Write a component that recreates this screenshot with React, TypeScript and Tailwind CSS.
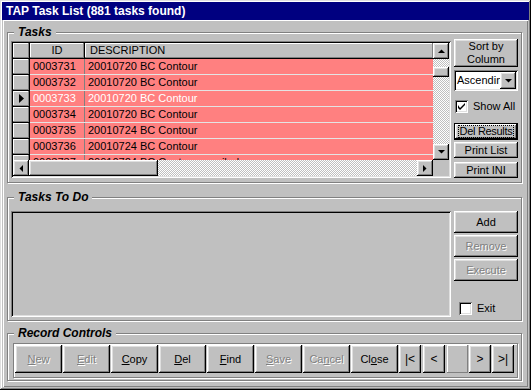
import React from 'react';

const raised =
  'shadow-[inset_-1px_-1px_0_#000,inset_1px_1px_0_#fff,inset_-2px_-2px_0_#808080,inset_2px_2px_0_#dfdfdf]';
const raisedThin = 'shadow-[inset_-1px_-1px_0_#808080,inset_1px_1px_0_#fff]';
const sunken =
  'shadow-[inset_1px_1px_0_#808080,inset_-1px_-1px_0_#fff,inset_2px_2px_0_#000,inset_-2px_-2px_0_#dfdfdf]';
const etched = 'border border-[#808080] shadow-[1px_1px_0_#fff,inset_1px_1px_0_#fff]';
const dither = 'bg-[repeating-conic-gradient(#fff_0_25%,#c0c0c0_0_50%)] bg-[length:2px_2px]';
const disabledText = 'text-[#808080] [text-shadow:1px_1px_0_#fff]';

type Dir = 'up' | 'down' | 'left' | 'right';

const Arrow = ({ dir }: { dir: Dir }) => {
  const pts: Record<Dir, string> = {
    up: '0,4 7,4 3.5,0.5',
    down: '0,0 7,0 3.5,3.5',
    left: '4,0 4,7 0.5,3.5',
    right: '0,0 0,7 3.5,3.5',
  };
  const vertical = dir === 'up' || dir === 'down';
  return (
    <svg width={vertical ? 7 : 4} height={vertical ? 4 : 7} viewBox={vertical ? '0 0 7 4' : '0 0 4 7'}>
      <polygon points={pts[dir]} fill="#000" />
    </svg>
  );
};

const ScrollBtn = ({ dir }: { dir: Dir }) => (
  <div className={`w-[16px] h-[16px] shrink-0 bg-[#c0c0c0] flex items-center justify-center ${raised}`}>
    <Arrow dir={dir} />
  </div>
);

const Btn = ({
  children,
  className = '',
  disabled = false,
}: {
  children: React.ReactNode;
  className?: string;
  disabled?: boolean;
}) => (
  <div
    className={`flex items-center justify-center text-center bg-[#c0c0c0] leading-[13px] ${raised} ${
      disabled ? disabledText : 'text-black'
    } ${className}`}
  >
    {children}
  </div>
);

const Check = ({ checked }: { checked: boolean }) => (
  <div className={`w-[13px] h-[13px] bg-white flex items-center justify-center ${sunken}`}>
    {checked && (
      <svg width="7" height="7" viewBox="0 0 7 7">
        <path d="M0 2v3l2 2l5-5v-2l-5 5z" fill="#000" />
      </svg>
    )}
  </div>
);

const Group = ({
  title,
  className = '',
  children,
}: {
  title: string;
  className?: string;
  children: React.ReactNode;
}) => (
  <div className={`relative w-[515px] ml-[4px] ${etched} ${className}`}>
    <div className="absolute top-[-8px] left-[6px] px-[4px] bg-[#c0c0c0] font-bold italic text-[12px] leading-[14px] text-black">
      {title}
    </div>
    {children}
  </div>
);

const rows = [
  ['0003731', '20010720 BC Contour'],
  ['0003732', '20010720 BC Contour'],
  ['0003733', '20010720 BC Contour'],
  ['0003734', '20010720 BC Contour'],
  ['0003735', '20010724 BC Contour'],
  ['0003736', '20010724 BC Contour'],
  ['0003737', '20010724 BC Contour emailed'],
];

const TaskGrid = () => (
  <div className={`w-[440px] h-[137px] p-[2px] flex flex-col bg-[#c0c0c0] ${sunken}`}>
    <div className="flex h-[117px]">
      <div className="w-[420px] flex flex-col overflow-hidden">
        {/* header */}
        <div className="flex h-[16px] shrink-0">
          <div className={`w-[17px] border-r border-b border-black ${raisedThin}`} />
          <div className={`w-[55px] border-r border-b border-black flex items-center justify-center ${raisedThin}`}>
            ID
          </div>
          <div className={`flex-1 border-b border-black flex items-center pl-[5px] ${raisedThin}`}>DESCRIPTION</div>
        </div>
        {rows.map(([id, desc], i) => {
          const selected = i === 2;
          return (
            <div key={id} className="flex h-[16px] shrink-0">
              <div
                className={`w-[17px] border-r border-b border-black bg-[#c0c0c0] flex items-center justify-center ${raisedThin}`}
              >
                {selected && (
                  <svg width="5" height="9" viewBox="0 0 5 9">
                    <polygon points="0,0 5,4.5 0,9" fill="#000" />
                  </svg>
                )}
              </div>
              <div
                className={`flex-1 flex bg-[#ff8080] border-b border-[#e4e4e4] ${
                  selected ? 'text-white' : 'text-black'
                }`}
              >
                <div className="w-[55px] border-r border-[#808080] pl-[3px] flex items-center">{id}</div>
                <div className="flex-1 pl-[3px] flex items-center whitespace-nowrap">{desc}</div>
              </div>
            </div>
          );
        })}
      </div>
      {/* vertical scrollbar */}
      <div className={`w-[16px] flex flex-col ${dither}`}>
        <ScrollBtn dir="up" />
        <div className="h-[8px]" />
        <div className={`h-[10px] bg-[#c0c0c0] ${raised}`} />
        <div className="flex-1" />
        <ScrollBtn dir="down" />
      </div>
    </div>
    {/* horizontal scrollbar */}
    <div className="flex h-[16px]">
      <div className={`w-[420px] flex ${dither}`}>
        <ScrollBtn dir="left" />
        <div className={`w-[129px] bg-[#c0c0c0] ${raised}`} />
        <div className="flex-1" />
        <ScrollBtn dir="right" />
      </div>
      <div className="w-[16px] bg-[#c0c0c0]" />
    </div>
  </div>
);

export default function App() {
  return (
    <div
      className={`w-[531px] h-[390px] bg-[#c0c0c0] p-[2px] flex flex-col text-[11px] text-black font-['Liberation_Sans',Arial,sans-serif] shadow-[inset_-1px_-1px_0_#000,inset_1px_1px_0_#dfdfdf,inset_-2px_-2px_0_#808080,inset_2px_2px_0_#fff]`}
    >
      <div className="h-[18px] shrink-0 bg-[#000080] text-white font-bold text-[12px] pl-[4px] flex items-center">
        TAP Task List (881 tasks found)
      </div>

      <div className="flex-1 mx-[1px] mb-[1px] flex flex-col shadow-[inset_1px_1px_0_#fff,inset_-1px_-1px_0_#808080]">
        {/* Tasks */}
        <Group title="Tasks" className="mt-[12px] h-[151px]">
          <div className="flex items-start pl-[3px]">
            <div className="mt-[8px]">
              <TaskGrid />
            </div>
            <div className="ml-[3px] mt-[6px] w-[64px] flex flex-col">
              <Btn className="h-[28px]">
                Sort by
                <br />
                Column
              </Btn>
              <div className={`mt-[3px] h-[21px] bg-white p-[2px] flex ${sunken}`}>
                <div className="flex-1 overflow-hidden whitespace-nowrap pl-[1px] flex items-center">Ascending</div>
                <div className={`w-[16px] h-[17px] bg-[#c0c0c0] flex items-center justify-center ${raised}`}>
                  <Arrow dir="down" />
                </div>
              </div>
              <div className="mt-[9px] h-[13px] flex items-center pl-[1px]">
                <Check checked />
                <span className="ml-[5px]">Show All</span>
              </div>
              <div className="mt-[10px] h-[17px] border border-black">
                <Btn className="h-full">
                  <span className="border border-dotted border-black px-[1px] leading-[11px] whitespace-nowrap tracking-[-0.3px]">
                    Del Results
                  </span>
                </Btn>
              </div>
              <Btn className="mt-[2px] h-[16px]">Print List</Btn>
              <Btn className="mt-[4px] h-[16px]">Print INI</Btn>
            </div>
          </div>
        </Group>

        {/* Tasks To Do */}
        <Group title="Tasks To Do" className="mt-[14px] h-[124px]">
          <div className="flex items-start pl-[3px] pt-[13px]">
            <div className={`w-[440px] h-[106px] bg-[#c0c0c0] ${sunken}`} />
            <div className="ml-[3px] w-[64px] flex flex-col">
              <Btn className="h-[22px]">Add</Btn>
              <Btn className="mt-[2px] h-[22px]" disabled>
                Remove
              </Btn>
              <Btn className="mt-[2px] h-[22px]" disabled>
                Execute
              </Btn>
              <div className="mt-[21px] h-[13px] flex items-center pl-[5px]">
                <Check checked={false} />
                <span className="ml-[5px]">Exit</span>
              </div>
            </div>
          </div>
        </Group>

        {/* Record Controls */}
        <Group title="Record Controls" className="mt-[12px] h-[48px]">
          <div className={`ml-[5px] mt-[9px] w-[505px] h-[35px] ${etched} pl-[1px] pt-[1px] flex gap-[1px]`}>
            <Btn className="w-[47px] h-[28px]" disabled>
              <span>
                <u>N</u>ew
              </span>
            </Btn>
            <Btn className="w-[47px] h-[28px]" disabled>
              <span>
                <u>E</u>dit
              </span>
            </Btn>
            <Btn className="w-[47px] h-[28px]">
              <span>
                <u>C</u>opy
              </span>
            </Btn>
            <Btn className="w-[47px] h-[28px]">
              <span>
                <u>D</u>el
              </span>
            </Btn>
            <Btn className="w-[47px] h-[28px]">
              <span>
                <u>F</u>ind
              </span>
            </Btn>
            <Btn className="w-[47px] h-[28px]" disabled>
              <span>
                <u>S</u>ave
              </span>
            </Btn>
            <Btn className="w-[47px] h-[28px]" disabled>
              <span>
                Ca<u>n</u>cel
              </span>
            </Btn>
            <Btn className="w-[47px] h-[28px]">
              <span>
                Cl<u>o</u>se
              </span>
            </Btn>
            <Btn className="w-[22px] h-[28px] text-[12px]">|&lt;</Btn>
            <Btn className="ml-[1px] w-[22px] h-[28px] text-[12px]">&lt;</Btn>
            <div className={`ml-[1px] w-[21px] h-[28px] bg-[#c0c0c0] ${raisedThin}`} />
            <Btn className="w-[22px] h-[28px] text-[12px]">&gt;</Btn>
            <Btn className="w-[22px] h-[28px] text-[12px]">&gt;|</Btn>
          </div>
        </Group>
      </div>
    </div>
  );
}
